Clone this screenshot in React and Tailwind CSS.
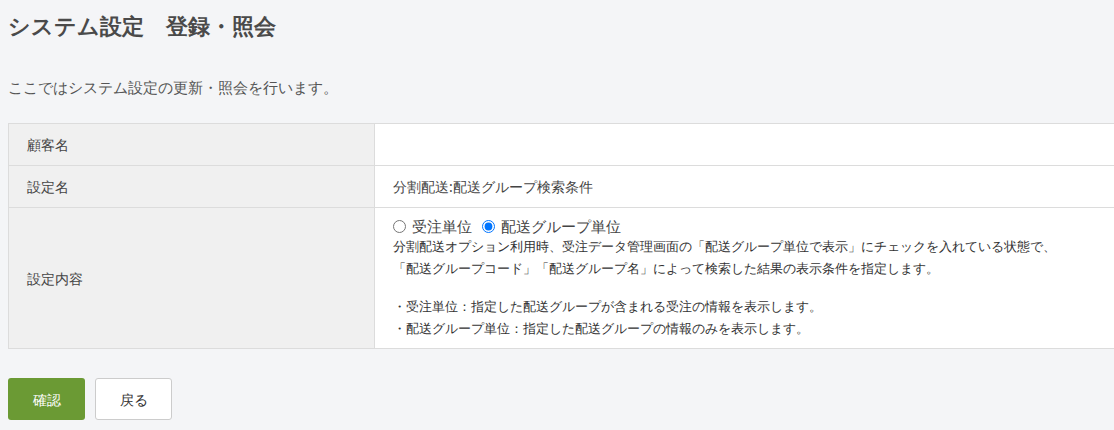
import React from "react";

export default function App() {
  return (
    <div className="min-h-[430px] w-[1114px] overflow-hidden bg-[#f4f5f7] pl-2 text-[#444] [font-family:'Noto_Sans_CJK_JP',sans-serif]">
      <h1 className="pt-[9px] text-[22px] font-bold leading-[32px] text-[#4a4a4a]">システム設定　登録・照会</h1>
      <p className="mt-[36px] text-[15px] leading-[20px] text-[#555]">ここではシステム設定の更新・照会を行います。</p>
      <table className="mt-[26px] w-[1120px] border-collapse text-[14px]">
        <tbody>
          <tr className="h-[42px]">
            <th className="w-[366px] border border-[#dcdcdc] bg-[#f0f0f0] pl-[18px] text-left font-normal">顧客名</th>
            <td className="border border-[#dcdcdc] bg-white"></td>
          </tr>
          <tr className="h-[42px]">
            <th className="border border-[#dcdcdc] bg-[#f0f0f0] pl-[18px] text-left font-normal">設定名</th>
            <td className="border border-[#dcdcdc] bg-white pl-[18px]">分割配送:配送グループ検索条件</td>
          </tr>
          <tr className="h-[141px]">
            <th className="border border-[#dcdcdc] bg-[#f0f0f0] pl-[18px] text-left font-normal">設定内容</th>
            <td className="border border-[#dcdcdc] bg-white pl-[18px] pt-[8px] pb-[8px] align-top">
              <div className="flex items-center gap-[6px] text-[15px] leading-[20px]">
                <input type="radio" name="u" className="m-0 h-[13px] w-[13px]" />
                <span className="mr-1">受注単位</span>
                <input type="radio" name="u" defaultChecked className="m-0 h-[13px] w-[13px]" />
                <span>配送グループ単位</span>
              </div>
              <div className="text-[12.5px] leading-[22px] text-[#333]">
                <p>分割配送オプション利用時、受注データ管理画面の「配送グループ単位で表示」にチェックを入れている状態で、</p>
                <p>「配送グループコード」「配送グループ名」によって検索した結果の表示条件を指定します。</p>
                <p className="mt-[16px]">・受注単位：指定した配送グループが含まれる受注の情報を表示します。</p>
                <p>・配送グループ単位：指定した配送グループの情報のみを表示します。</p>
              </div>
            </td>
          </tr>
        </tbody>
      </table>
      <div className="mt-[29px] flex gap-[10px]">
        <button className="h-[42px] w-[77px] rounded-[3px] bg-[#6b9a34] text-[14px] text-white">確認</button>
        <button className="h-[42px] w-[77px] rounded-[3px] border border-[#ccc] bg-white text-[14px] text-[#333]">戻る</button>
      </div>
    </div>
  );
}
